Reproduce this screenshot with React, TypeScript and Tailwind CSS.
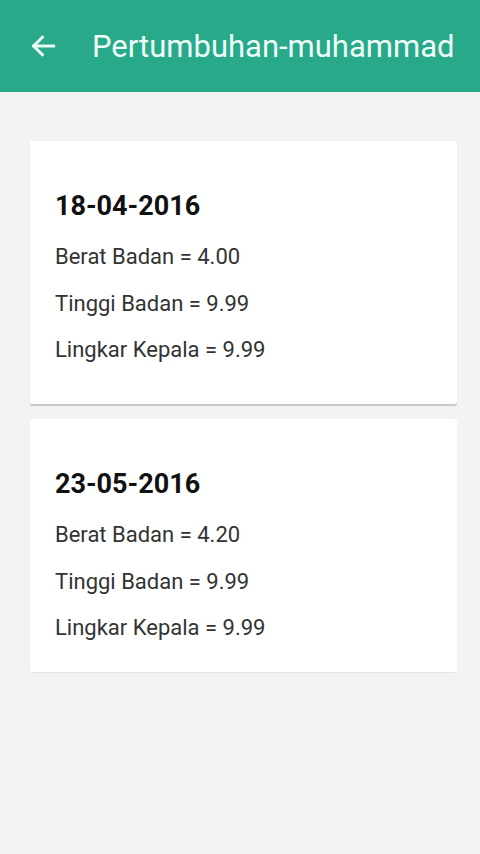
import React from "react";

const entries = [
  { date: "18-04-2016", berat: "4.00", tinggi: "9.99", lingkar: "9.99", strong: true },
  { date: "23-05-2016", berat: "4.20", tinggi: "9.99", lingkar: "9.99", strong: false },
];

export default function App() {
  return (
    <div className="w-[480px] h-[854px] bg-[#f3f3f3] flex flex-col" style={{ fontFamily: "Roboto, 'Noto Sans', sans-serif" }}>
      <div className="h-[92px] bg-[#27a98a] flex items-center shrink-0">
        <div className="w-[92px] pl-[27px] flex items-center">
          <svg width="32" height="32" viewBox="0 0 24 24" fill="none" stroke="#eefdf8" strokeWidth="2.2" strokeLinecap="square">
            <path d="M20 12H5" />
            <path d="M11.5 5.5 5 12l6.5 6.5" />
          </svg>
        </div>
        <div className="text-[31px] text-[#eefdf8] leading-none">Pertumbuhan-muhammad</div>
      </div>
      <div className="flex flex-col gap-[15px] pt-[49px] pl-[30px]">
        {entries.map((e) => (
          <div
            key={e.date}
            className={
              "w-[427px] bg-white rounded-[2px] pl-[25px] pt-[47px] " +
              (e.strong ? "shadow-[0_2px_1px_rgba(0,0,0,0.18)] h-[263px]" : "shadow-[0_1px_1px_rgba(0,0,0,0.06)] h-[253px]")
            }
          >
            <div className="text-[27px] font-bold text-[#111] leading-[36px] mb-[20px]">{e.date}</div>
            <div className="text-[22px] text-[#333] leading-[26px] flex flex-col gap-[20.5px]">
              <div>Berat Badan = {e.berat}</div>
              <div>Tinggi Badan = {e.tinggi}</div>
              <div>Lingkar Kepala = {e.lingkar}</div>
            </div>
          </div>
        ))}
      </div>
    </div>
  );
}
